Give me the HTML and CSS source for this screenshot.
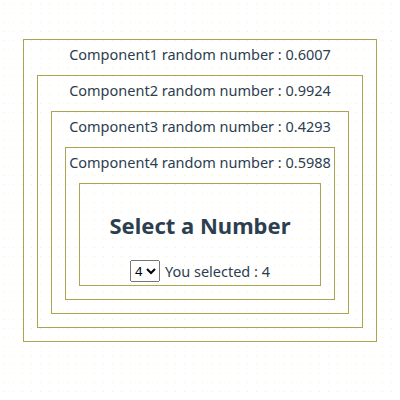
FILE: index.html
```html
<!DOCTYPE html>
<html lang="ko">

<head>
    <meta charset="UTF-8">
    <meta name="viewport" content="width=device-width, initial-scale=1.0">
    <title>Components</title>
    <link rel="stylesheet" href="styles.css">
</head>

<body>
    <div id="app">
        <div class="box">
            <p class="rand">Component1 random number : 0.6007</p>
            <div class="box">
                <p class="rand">Component2 random number : 0.9924</p>
                <div class="box">
                    <p class="rand">Component3 random number : 0.4293</p>
                    <div class="box">
                        <p class="rand">Component4 random number : 0.5988</p>
                        <div class="box picker">
                            <h2>Select a Number</h2>
                            <div class="row">
                                <select id="num">
                                    <option>1</option>
                                    <option>2</option>
                                    <option>3</option>
                                    <option selected>4</option>
                                    <option>5</option>
                                </select>
                                <span>You selected : 4</span>
                            </div>
                        </div>
                    </div>
                </div>
            </div>
        </div>
    </div>
</body>

</html>
```

FILE: styles.css
```css
body {
    margin: 0;
    background-color: #fff;
    background-image: radial-gradient(#faf5a8 0.7px, transparent 1px);
    background-size: 9px 9px;
    font-family: "Noto Sans", "Noto Sans CJK KR", sans-serif;
    color: #2c3e50;
}

#app {
    padding: 39px 23px 0;
    text-align: center;
}

.box {
    border: 1px solid #aaa453;
    padding: 4px 2px 13px;
}

.box .box {
    margin: 0 11px;
}

.rand {
    margin: 0 0 10px;
    font-size: 14.5px;
    line-height: 21px;
    white-space: nowrap;
}

.picker {
    padding: 0 0 3px;
}

.picker h2 {
    margin: 26px 0 20px;
    font-size: 22px;
    line-height: 30px;
}

.row {
    display: flex;
    justify-content: center;
    align-items: center;
    gap: 5px;
    font-size: 14.5px;
    line-height: 22px;
}

select {
    font-size: 13px;
    font-family: "Noto Sans", sans-serif;
}
```
